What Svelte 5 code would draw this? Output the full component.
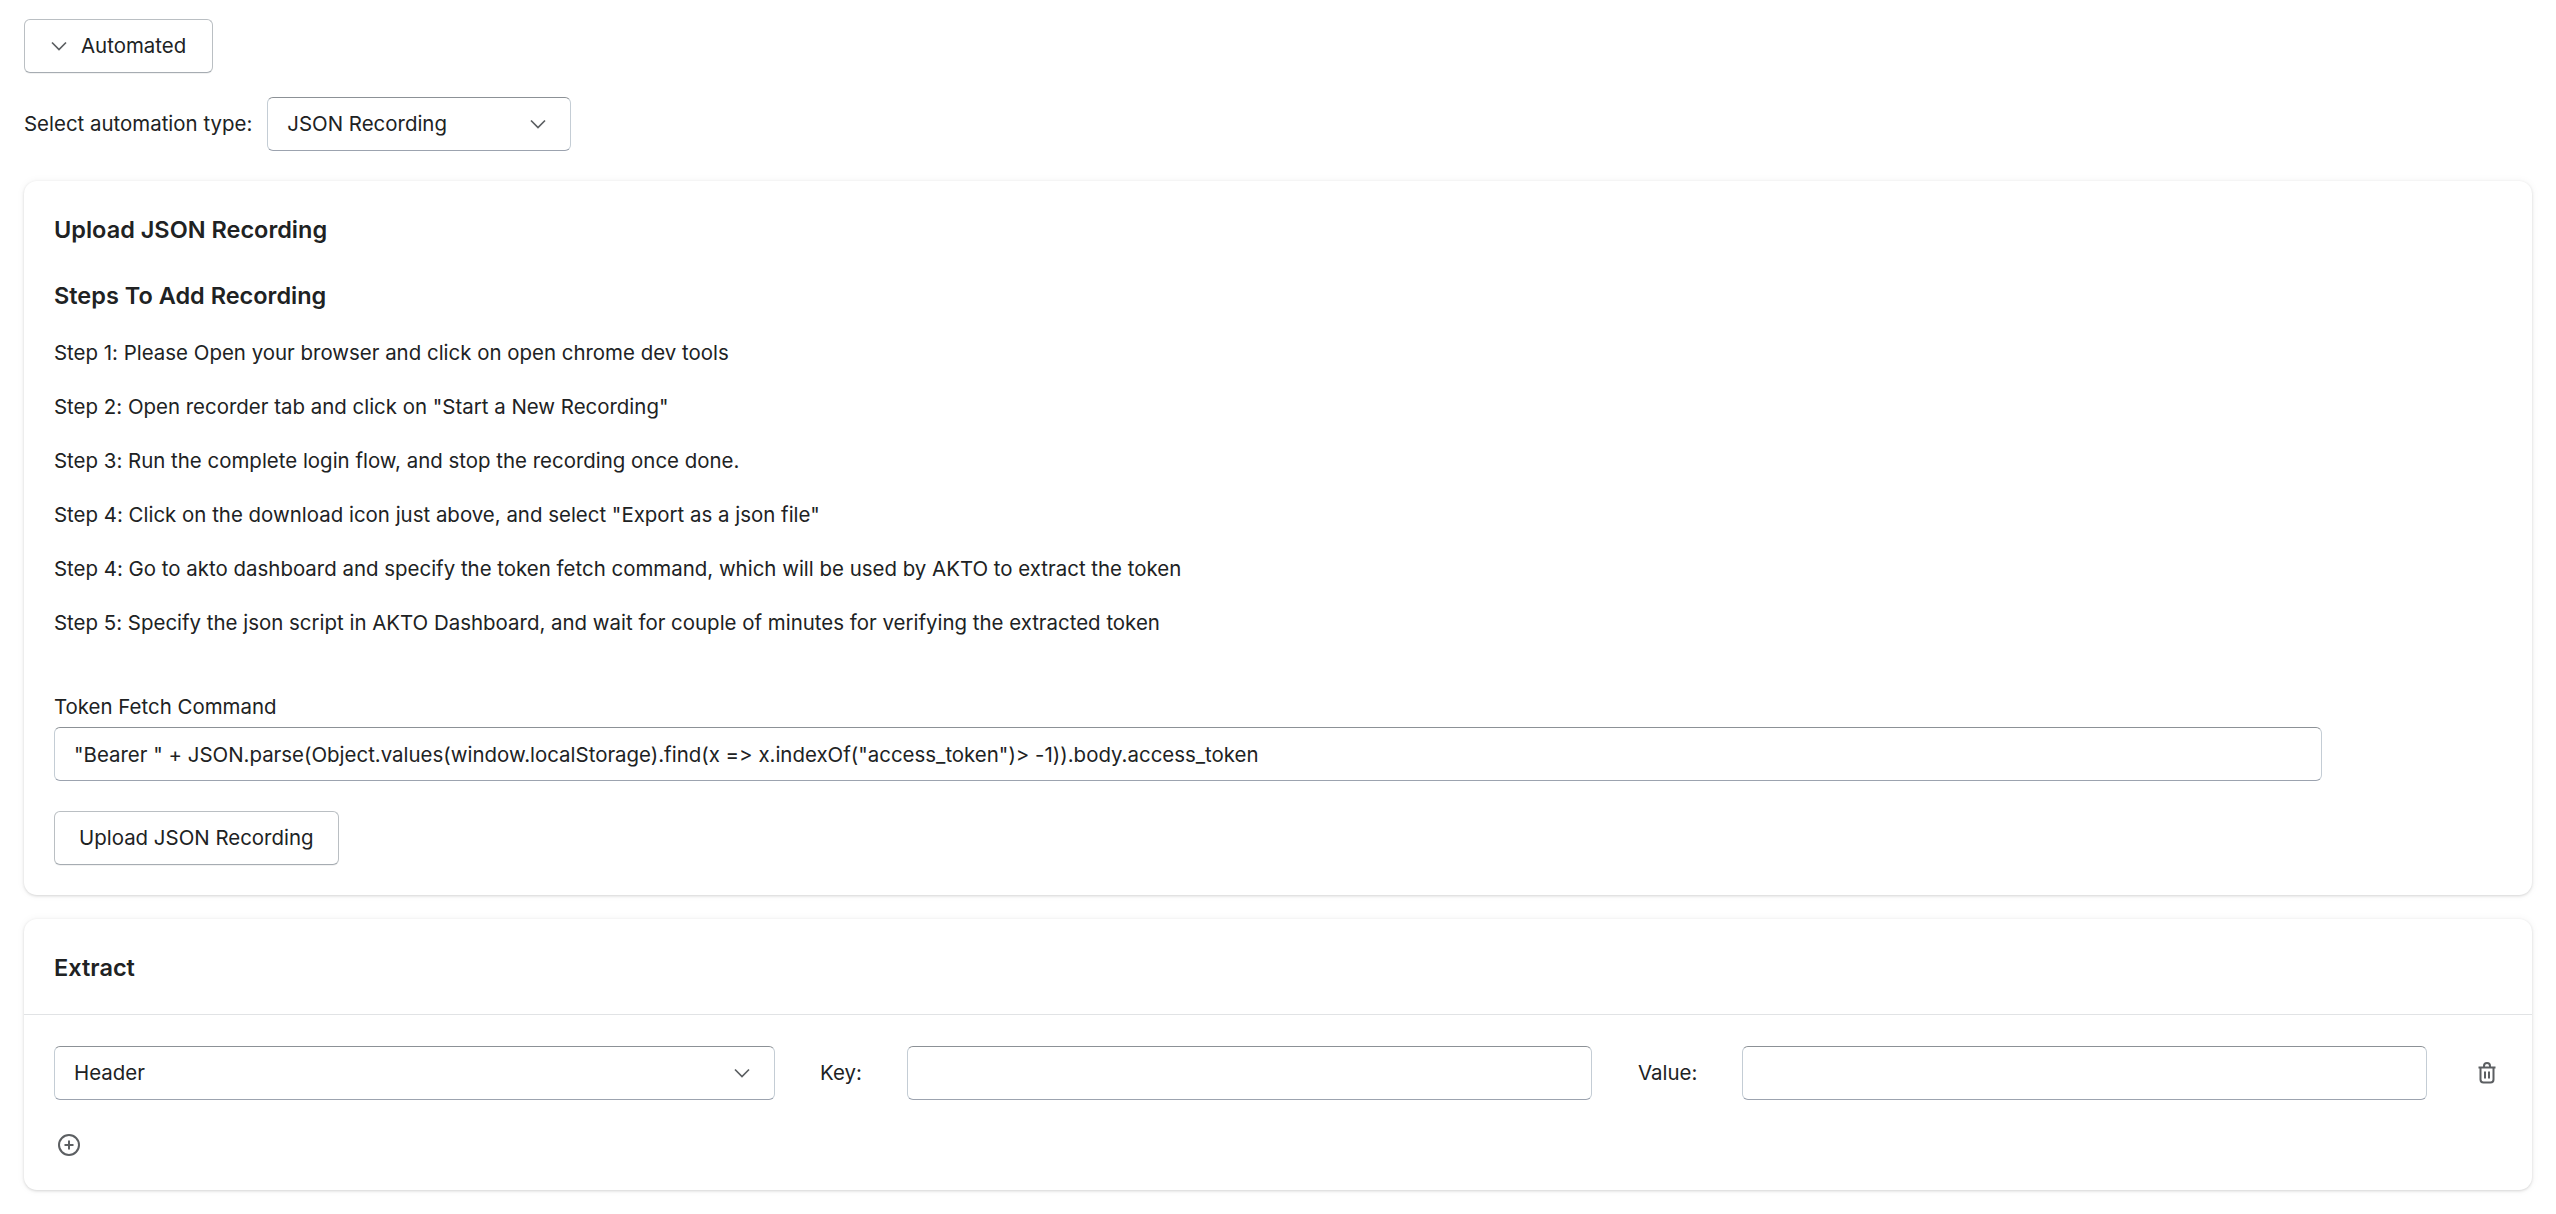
<script>
  const steps = [
    'Step 1: Please Open your browser and click on open chrome dev tools',
    'Step 2: Open recorder tab and click on "Start a New Recording"',
    'Step 3: Run the complete login flow, and stop the recording once done.',
    'Step 4: Click on the download icon just above, and select "Export as a json file"',
    'Step 4: Go to akto dashboard and specify the token fetch command, which will be used by AKTO to extract the token',
    'Step 5: Specify the json script in AKTO Dashboard, and wait for couple of minutes for verifying the extracted token'
  ];
  const command = '"Bearer " + JSON.parse(Object.values(window.localStorage).find(x => x.indexOf("access_token")> -1)).body.access_token';
</script>

<div class="page">
  <button class="btn toggle">
    <svg class="chev" viewBox="0 0 20 20"><path d="M3 6.500l7 7 7-7" /></svg>
    Automated
  </button>

  <div class="type-row">
    <span>Select automation type:</span>
    <div class="select type-select">
      <span>JSON Recording</span>
      <svg class="chev" viewBox="0 0 20 20"><path d="M3 6.500l7 7 7-7" /></svg>
    </div>
  </div>

  <section class="card upload">
    <h2>Upload JSON Recording</h2>
    <h3>Steps To Add Recording</h3>
    <div class="steps">
      {#each steps as step}
        <p>{step}</p>
      {/each}
    </div>
    <label class="field-label" for="cmd">Token Fetch Command</label>
    <input id="cmd" class="input cmd" value={command} />
    <button class="btn upload-btn">Upload JSON Recording</button>
  </section>

  <section class="card extract">
    <div class="extract-head"><h2>Extract</h2></div>
    <div class="extract-body">
      <div class="row">
        <div class="select header-select">
          <span>Header</span>
          <svg class="chev" viewBox="0 0 20 20"><path d="M3 6.500l7 7 7-7" /></svg>
        </div>
        <span class="key-label">Key:</span>
        <input class="input kv" />
        <span class="value-label">Value:</span>
        <input class="input kv" />
        <svg class="trash" viewBox="0 0 24 24">
          <path d="M3.500 6.500h17M9 6.500V5a3 3 0 0 1 6 0v1.500M5.500 6.500v12a3 3 0 0 0 3 3h7a3 3 0 0 0 3-3v-12M10 10.500v7M14 10.500v7" />
        </svg>
      </div>
      <svg class="plus" viewBox="0 0 24 24">
        <circle cx="12" cy="12" r="10" />
        <path d="M12 7.500v9M7.500 12h9" />
      </svg>
    </div>
  </section>
</div>

<style>
  :global(body) {
    background: #fff;
  }
  .page {
    font-family: Inter, "Liberation Sans", sans-serif;
    font-size: 20.450px;
    line-height: 28px;
    font-variant-ligatures: none;
    font-feature-settings: "calt" 0;
    color: #202223;
    padding: 19px 24px 24px 24px;
    box-sizing: border-box;
  }
  .btn {
    display: flex;
    align-items: center;
    height: 54px;
    box-sizing: border-box;
    background: #fff;
    border: 1px solid #babfc3;
    border-bottom-color: #a6acb2;
    border-radius: 6px;
    font: inherit;
    font-variant-ligatures: none;
    color: inherit;
    box-shadow: 0 1px 0 rgba(0, 0, 0, 0.05);
  }
  .toggle {
    width: 189px;
    padding: 0 24px;
    gap: 12px;
    margin-bottom: 24px;
  }
  .chev {
    width: 20px;
    height: 20px;
    flex: none;
    fill: none;
    stroke: #5c5f62;
    stroke-width: 1.700;
  }
  .type-row {
    display: flex;
    align-items: center;
    gap: 15px;
    margin-bottom: 30px;
  }
  .select {
    display: flex;
    align-items: center;
    justify-content: space-between;
    height: 54px;
    box-sizing: border-box;
    padding: 0 22px 0 19px;
    background: #fff;
    border: 1px solid #c4cdd5;
    border-top-color: #8c9196;
    border-bottom-color: #9ca3af;
    border-radius: 6px;
  }
  .type-select {
    width: 304px;
  }
  .card {
    background: #fff;
    border-radius: 13px;
    box-shadow: 0 0 8px rgba(23, 24, 24, 0.05), 0 1px 3px rgba(0, 0, 0, 0.15);
  }
  .upload {
    height: 714px;
    box-sizing: border-box;
    padding: 35px 30px 0 30px;
    margin-bottom: 24px;
  }
  h2,
  h3 {
    margin: 0;
    font-size: 23.500px;
    line-height: 28px;
    font-weight: 600;
  }
  h3 {
    margin-top: 38px;
  }
  .steps {
    margin-top: 29px;
  }
  .steps p {
    margin: 0 0 26px 0;
  }
  .field-label {
    display: block;
    margin: 56px 0 6px 0;
  }
  .input {
    height: 54px;
    box-sizing: border-box;
    padding: 0 19px;
    font: inherit;
    font-variant-ligatures: none;
    color: inherit;
    background: #fff;
    border: 1px solid #c4cdd5;
    border-top-color: #8c9196;
    border-bottom-color: #9ca3af;
    border-radius: 6px;
    outline: none;
  }
  .cmd {
    display: block;
    width: 2268px;
  }
  .upload-btn {
    margin-top: 30px;
    padding: 0 24px;
  }
  .extract {
    height: 271px;
  }
  .extract-head {
    height: 96px;
    box-sizing: border-box;
    padding: 35px 30px 0 30px;
    border-bottom: 1px solid #e1e3e5;
  }
  .extract-body {
    padding: 31px 30px 0 30px;
  }
  .row {
    display: flex;
    align-items: center;
  }
  .header-select {
    width: 721px;
  }
  .key-label {
    margin-left: 45px;
    width: 87px;
  }
  .value-label {
    margin-left: 46px;
    width: 104px;
  }
  .kv {
    width: 685px;
  }
  .trash {
    width: 24px;
    height: 24px;
    margin-left: 48px;
    fill: none;
    stroke: #5c5f62;
    stroke-width: 2;
  }
  .plus {
    display: block;
    width: 24px;
    height: 24px;
    margin-top: 33px;
    fill: none;
    stroke: #5c5f62;
    stroke-width: 2;
    margin-left: 3px;
  }
</style>
